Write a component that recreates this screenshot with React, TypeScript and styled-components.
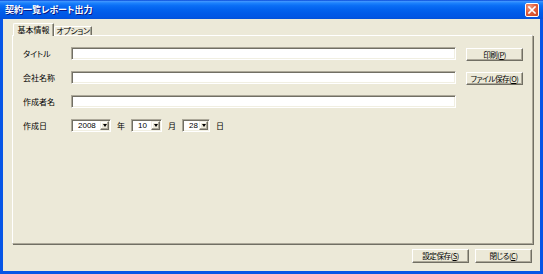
import React from "react";
import styled, { createGlobalStyle } from "styled-components";

const Global = createGlobalStyle`
  html, body { margin: 0; padding: 0; background: #ECE9D8; }
  body {
    font-family: "Noto Sans CJK JP", "Noto Sans", sans-serif;
    font-feature-settings: "palt";
  }
`;

const Window = styled.div`
  width: 543px;
  height: 274px;
  display: flex;
  flex-direction: column;
  overflow: hidden;
  font-family: "Noto Sans CJK JP", "Noto Sans", sans-serif;
  font-feature-settings: "palt";
  font-size: 8px;
  line-height: 1;
  color: #000;
`;

const TitleBar = styled.div`
  flex: none;
  height: 19px;
  box-sizing: border-box;
  display: flex;
  align-items: center;
  justify-content: space-between;
  padding: 0 4px 0 5px;
  background: linear-gradient(
    #0847d6 0%,
    #3d95ff 8%,
    #1c82fc 16%,
    #0a6ef5 30%,
    #0262ee 50%,
    #005ae8 70%,
    #0056e5 88%,
    #0350d8 100%
  );
`;

const Title = styled.span`
  color: #fff;
  font-weight: 700;
  font-size: 9px;
  text-shadow: 1px 1px 0 #0a1883;
`;

const CloseButton = styled.div`
  width: 14px;
  height: 14px;
  box-sizing: border-box;
  border: 1px solid #fff;
  border-radius: 2px;
  background: radial-gradient(circle at 30% 25%, #f29b80 0%, #e2603f 45%, #c9421f 100%);
  display: flex;
  align-items: center;
  justify-content: center;
`;

const Body = styled.div`
  flex: 1;
  display: flex;
  flex-direction: column;
  background: #ece9d8;
  border: 3px solid #0655e6;
  border-top: none;
  padding: 4px 7px 0 9px;
`;

const TabStrip = styled.div`
  flex: none;
  height: 12px;
  display: flex;
  align-items: flex-end;
  padding-left: 1px;
`;

const Tab = styled.div<{ $active?: boolean }>`
  position: relative;
  z-index: ${(p) => (p.$active ? 2 : 1)};
  box-sizing: border-box;
  width: ${(p) => (p.$active ? 41 : 38)}px;
  height: ${(p) => (p.$active ? 13 : 9)}px;
  margin-bottom: ${(p) => (p.$active ? -1 : 0)}px;
  background: #ece9d8;
  border-top: 1px solid #fff;
  border-left: 1px solid #fff;
  border-right: 1px solid #716f64;
  box-shadow: inset -1px 0 0 #aca899;
  border-top-left-radius: 2px;
  border-top-right-radius: 1px;
  display: flex;
  align-items: ${(p) => (p.$active ? "flex-start" : "center")};
  justify-content: center;
  padding-top: ${(p) => (p.$active ? 2 : 0)}px;
  white-space: nowrap;
  letter-spacing: ${(p) => (p.$active ? 0 : -0.4)}px;
`;

const Panel = styled.div`
  position: relative;
  z-index: 1;
  flex: none;
  height: 209px;
  box-sizing: border-box;
  border: 1px solid;
  border-color: #fff #aca899 #aca899 #fff;
  box-shadow: 1px 1px 0 #716f64;
  padding: 11px 0 0 10px;
  display: grid;
  grid-template-columns: 38px 385px 57px;
  grid-auto-rows: 13px;
  column-gap: 10px;
  row-gap: 11px;
  align-content: start;
`;

const Label = styled.div`
  display: flex;
  align-items: center;
  white-space: nowrap;
`;

const Field = styled.div`
  height: 13px;
  box-sizing: border-box;
  background: #fff;
  border: 1px solid;
  border-color: #aca899 #fff #fff #aca899;
  box-shadow: inset 1px 1px 0 #716f64, inset -1px -1px 0 #f1efe2;
`;

const Button = styled.div<{ $width?: number }>`
  width: ${(p) => p.$width ?? 57}px;
  height: ${(p) => (p.$width ? 14 : 13)}px;
  margin-top: ${(p) => (p.$width ? 0 : 1)}px;
  box-sizing: border-box;
  background: #ece9d8;
  border: 1px solid;
  border-color: #fff #716f64 #716f64 #fff;
  box-shadow: inset -1px -1px 0 #aca899;
  display: flex;
  align-items: center;
  justify-content: center;
  white-space: nowrap;
  align-self: start;
  letter-spacing: -0.5px;
  font-size: 7.6px;
  u {
    text-decoration: underline;
    text-underline-offset: 1px;
  }
`;

const DateRow = styled.div`
  grid-column: 2 / 4;
  display: flex;
  align-items: center;
  gap: 6px;
`;

const Select = styled.div<{ $width: number }>`
  width: ${(p) => p.$width}px;
  height: 13px;
  box-sizing: border-box;
  background: #fff;
  border: 1px solid;
  border-color: #aca899 #fff #fff #aca899;
  box-shadow: inset 1px 1px 0 #716f64, inset -1px -1px 0 #f1efe2;
  padding: 1px 1px 1px 2px;
  display: flex;
  align-items: center;
`;

const SelectValue = styled.span`
  flex: 1;
  padding-left: 4px;
  font-family: "Liberation Sans", "Noto Sans", sans-serif;
  font-size: 8px;
`;

const ArrowButton = styled.div`
  flex: none;
  width: 9px;
  height: 9px;
  box-sizing: border-box;
  background: #ece9d8;
  border: 1px solid;
  border-color: #f1efe2 #716f64 #716f64 #f1efe2;
  box-shadow: inset -1px -1px 0 #aca899, inset 1px 1px 0 #fff;
  display: flex;
  align-items: center;
  justify-content: center;
  &::after {
    content: "";
    border-left: 2.5px solid transparent;
    border-right: 2.5px solid transparent;
    border-top: 3px solid #000;
  }
`;

const Footer = styled.div`
  flex: none;
  display: flex;
  justify-content: flex-end;
  gap: 6px;
  margin-top: 5px;
  padding-right: 1px;
`;

const CloseIcon = () => (
  <svg width="8" height="8" viewBox="0 0 8 8">
    <path d="M1 1 L7 7 M7 1 L1 7" stroke="#fff" strokeWidth="1.6" strokeLinecap="square" />
  </svg>
);

const DateSelect = ({ width, value }: { width: number; value: string }) => (
  <Select $width={width}>
    <SelectValue>{value}</SelectValue>
    <ArrowButton />
  </Select>
);

export default function App() {
  return (
    <>
      <Global />
      <Window>
        <TitleBar>
          <Title>契約一覧レポート出力</Title>
          <CloseButton>
            <CloseIcon />
          </CloseButton>
        </TitleBar>
        <Body>
          <TabStrip>
            <Tab $active>基本情報</Tab>
            <Tab>オプション</Tab>
          </TabStrip>
          <Panel>
            <Label>タイトル</Label>
            <Field />
            <Button>
              印刷(<u>P</u>)
            </Button>
            <Label>会社名称</Label>
            <Field />
            <Button>
              ファイル保存(<u>O</u>)
            </Button>
            <Label>作成者名</Label>
            <Field />
            <div />
            <Label>作成日</Label>
            <DateRow>
              <DateSelect width={40} value="2008" />
              <span>年</span>
              <DateSelect width={31} value="10" />
              <span>月</span>
              <DateSelect width={28} value="28" />
              <span>日</span>
            </DateRow>
          </Panel>
          <Footer>
            <Button $width={57}>
              設定保存(<u>S</u>)
            </Button>
            <Button $width={57}>
              閉じる(<u>C</u>)
            </Button>
          </Footer>
        </Body>
      </Window>
    </>
  );
}
